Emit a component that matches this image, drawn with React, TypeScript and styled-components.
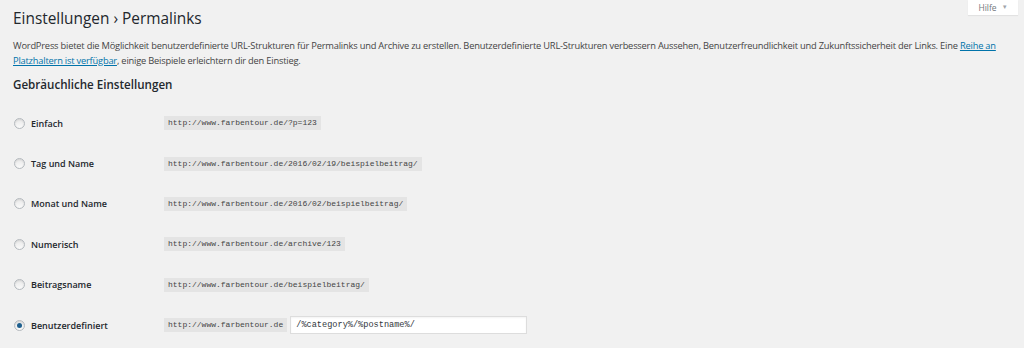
import styled, { createGlobalStyle } from "styled-components";

const GlobalStyle = createGlobalStyle`
  html, body {
    margin: 0;
    padding: 0;
    background: #f1f1f1;
  }
  body {
    font-family: "Open Sans", "Liberation Sans", sans-serif;
    color: #444;
  }
`;

interface PermalinkOption {
  label: string;
  example: string;
}

const options: PermalinkOption[] = [
  { label: "Einfach", example: "http://www.farbentour.de/?p=123" },
  { label: "Tag und Name", example: "http://www.farbentour.de/2016/02/19/beispielbeitrag/" },
  { label: "Monat und Name", example: "http://www.farbentour.de/2016/02/beispielbeitrag/" },
  { label: "Numerisch", example: "http://www.farbentour.de/archive/123" },
  { label: "Beitragsname", example: "http://www.farbentour.de/beispielbeitrag/" },
];

const Page = styled.div`
  position: relative;
  width: 1024px;
  height: 348px;
  overflow: hidden;
  padding: 0 0 0 13px;
  box-sizing: border-box;
`;

const HelpTab = styled.button`
  position: absolute;
  top: 0;
  right: 6px;
  width: 50px;
  height: 15px;
  border: none;
  background: #fff;
  box-shadow: 0 1px 1px rgba(0, 0, 0, 0.06);
  font-family: "Open Sans", "Liberation Sans", sans-serif;
  font-size: 8.5px;
  color: #72777c;
  display: flex;
  align-items: center;
  justify-content: center;
  gap: 5px;
  padding: 0 0 1px;
`;

const Caret = styled.span`
  font-size: 6px;
  color: #a0a5aa;
`;

const Title = styled.h1`
  margin: 0;
  padding-top: 6px;
  font-size: 15.4px;
  font-weight: 400;
  line-height: 26px;
  color: #23282d;
`;

const Intro = styled.p`
  margin: 7px 0 0;
  padding-right: 12px;
  font-size: 9.3px;
  letter-spacing: -0.2px;
  line-height: 14.5px;
  color: #444;
`;

const Link = styled.a`
  color: #0073aa;
  text-decoration: underline;
`;

const SectionTitle = styled.h2`
  margin: 8px 0 0;
  font-size: 11.6px;
  font-weight: 600;
  line-height: 18px;
  color: #23282d;
`;

const OptionList = styled.div`
  margin-top: 9px;
  display: flex;
  flex-direction: column;
`;

const OptionRow = styled.label`
  height: 40.4px;
  display: grid;
  grid-template-columns: 151px 1fr;
  align-items: center;
`;

const OptionLabel = styled.span`
  display: flex;
  align-items: center;
  gap: 6px;
  padding-left: 1px;
  font-size: 9px;
  font-weight: 600;
  color: #23282d;
`;

const Radio = styled.span<{ $checked?: boolean }>`
  width: 9px;
  height: 9px;
  border-radius: 50%;
  border: 1px solid #b4b9be;
  background: linear-gradient(#e9e9e9, #fafafa);
  box-shadow: inset 0 1px 2px rgba(0, 0, 0, 0.1);
  display: flex;
  align-items: center;
  justify-content: center;

  &::after {
    content: "";
    display: ${(p) => (p.$checked ? "block" : "none")};
    width: 5px;
    height: 5px;
    border-radius: 50%;
    background: #1e5f8e;
  }
`;

const UrlCell = styled.span`
  display: flex;
  align-items: center;
  gap: 3px;
`;

const Code = styled.code`
  background: #e4e4e4;
  padding: 2px 4px 3px;
  font-family: "Liberation Mono", "DejaVu Sans Mono", monospace;
  font-size: 8px;
  line-height: 9px;
  color: #444;
`;

const StructureInput = styled.input`
  width: 237px;
  height: 18px;
  box-sizing: border-box;
  border: 1px solid #ddd;
  background: #fff;
  box-shadow: inset 0 1px 2px rgba(0, 0, 0, 0.05);
  padding: 0 5px;
  font-family: "Liberation Mono", "DejaVu Sans Mono", monospace;
  font-size: 8.6px;
  color: #32373c;
  outline: none;
`;

export default function App() {
  return (
    <>
      <GlobalStyle />
      <Page>
        <HelpTab type="button">
          Hilfe <Caret>▼</Caret>
        </HelpTab>
        <Title>Einstellungen › Permalinks</Title>
        <Intro>
          WordPress bietet die Möglichkeit benutzerdefinierte URL-Strukturen für Permalinks und Archive zu
          erstellen. Benutzerdefinierte URL-Strukturen verbessern Aussehen, Benutzerfreundlichkeit und
          Zukunftssicherheit der Links. Eine <Link href="#">Reihe an Platzhaltern ist verfügbar</Link>, einige
          Beispiele erleichtern dir den Einstieg.
        </Intro>
        <SectionTitle>Gebräuchliche Einstellungen</SectionTitle>
        <OptionList>
          {options.map((opt) => (
            <OptionRow key={opt.label}>
              <OptionLabel>
                <Radio />
                {opt.label}
              </OptionLabel>
              <UrlCell>
                <Code>{opt.example}</Code>
              </UrlCell>
            </OptionRow>
          ))}
          <OptionRow>
            <OptionLabel>
              <Radio $checked />
              Benutzerdefiniert
            </OptionLabel>
            <UrlCell>
              <Code>http://www.farbentour.de</Code>
              <StructureInput defaultValue="/%category%/%postname%/" />
            </UrlCell>
          </OptionRow>
        </OptionList>
      </Page>
    </>
  );
}
